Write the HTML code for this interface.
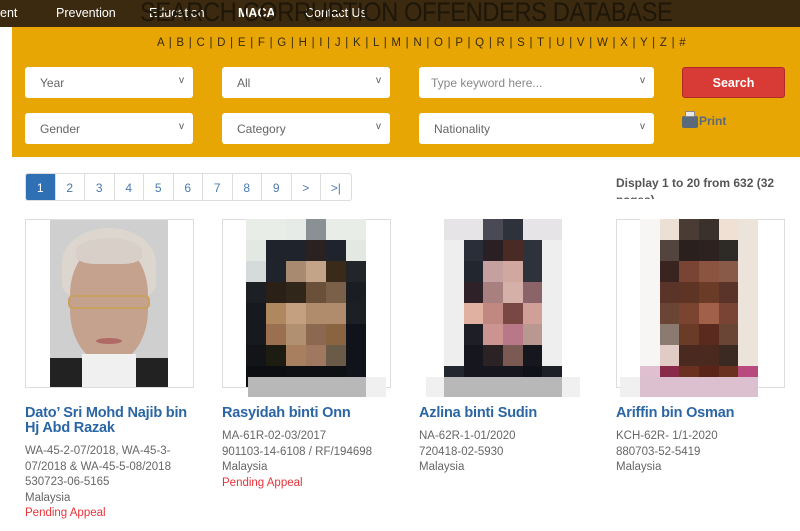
<!DOCTYPE html>
<html><head><meta charset="utf-8"><style>
*{margin:0;padding:0;box-sizing:border-box}
body{width:800px;height:531px;overflow:hidden;background:#fff;font-family:"Liberation Sans",sans-serif;position:relative}
.a{position:absolute}
.nav{left:0;top:0;width:800px;height:27px;background:#3b2a0f;}
.nav span{position:absolute;top:6px;color:#fff;font-size:12.5px}
.title{left:140px;top:-3px;font-size:27px;color:#1e1608;letter-spacing:-0.5px;white-space:nowrap;transform:scaleX(.88);transform-origin:left}
.panel{left:12px;top:27px;width:788px;height:130px;background:#e8a605}
.letters{left:157px;width:500px;top:37px;font-size:11.5px;color:#3a2a10;letter-spacing:.75px;white-space:nowrap}
.sel{background:#fff;border-radius:3px;height:31px;font-size:12px;color:#666;padding:9px 0 0 15px}
.sel:after{content:"v";position:absolute;right:9px;top:8px;font-size:10px;color:#555}
.btn{left:682px;top:67px;width:103px;height:31px;background:#d83a36;border:1px solid #b02a28;border-radius:3px;color:#fff;font-weight:bold;font-size:12.5px;text-align:center;padding-top:8px}
.pg{top:173px;height:28px;border:1px solid #ddd;display:flex;border-radius:3px;overflow:hidden;left:25px}
.pg div{width:29.5px;text-align:center;font-size:12px;color:#4a7ab0;padding-top:7px;border-right:1px solid #ddd}
.grid{display:grid}
.name{font-size:14.5px;font-weight:bold;color:#2b66a4;line-height:15px;letter-spacing:-.2px}
.det{font-size:11.5px;color:#666;line-height:15.5px}
.red{color:#e8333a}
</style></head><body>
<div class="a nav">
<span style="left:0">ent</span><span style="left:56px">Prevention</span><span style="left:149px">Education</span><span style="left:238px;font-weight:bold">MACA</span><span style="left:305px">Contact Us</span>
</div>
<div class="a title">SEARCH CORRUPTION OFFENDERS DATABASE</div>
<div class="a panel"></div>
<div class="a letters">A | B | C | D | E | F | G | H | I | J | K | L | M | N | O | P | Q | R | S | T | U | V | W | X | Y | Z | #</div>
<div class="a sel" style="left:25px;top:67px;width:168px">Year</div>
<div class="a sel" style="left:222px;top:67px;width:168px">All</div>
<div class="a sel" style="left:419px;top:67px;width:235px;color:#888;padding-left:12px">Type keyword here...</div>
<div class="a sel" style="left:25px;top:113px;width:168px">Gender</div>
<div class="a sel" style="left:222px;top:113px;width:168px">Category</div>
<div class="a sel" style="left:419px;top:113px;width:235px">Nationality</div>
<div class="a btn">Search</div>
<div class="a" style="left:682px;top:116px;width:16px;height:12px;background:#5a6a7a;border-radius:2px"></div>
<div class="a" style="left:685px;top:111px;width:10px;height:6px;background:#e8e8e8;border:1px solid #888"></div>
<div class="a" style="left:699px;top:114px;font-size:12px;color:#5a6a7a;font-weight:bold">Print</div>
<div class="a pg"><div style="background:#2f6fb3;color:#fff">1</div><div>2</div><div>3</div><div>4</div><div>5</div><div>6</div><div>7</div><div>8</div><div>9</div><div>&gt;</div><div style="border-right:0">&gt;|</div></div>
<div class="a" style="left:616px;top:175px;font-size:12px;font-weight:bold;color:#555;line-height:17px;width:180px;height:24px;overflow:hidden">Display 1 to 20 from 632 (32 pages)</div>
<div class="a" style="left:25px;top:219px;width:169px;height:169px;border:1px solid #ddd"></div>
<div class="a" style="left:222px;top:219px;width:169px;height:169px;border:1px solid #ddd"></div>
<div class="a" style="left:616px;top:219px;width:169px;height:169px;border:1px solid #ddd"></div>
<div class="a" style="left:50px;top:220px;width:118px;height:167px;background:#d0cfcf;overflow:hidden">
<div class="a" style="left:12px;top:8px;width:94px;height:70px;border-radius:50% 50% 20% 20%;background:#dcd6cf"></div>
<div class="a" style="left:20px;top:26px;width:78px;height:116px;border-radius:42% 42% 45% 45%;background:#c4a28e"></div>
<div class="a" style="left:26px;top:18px;width:66px;height:26px;border-radius:50% 50% 30% 30%;background:#d8d0c8"></div>
<div class="a" style="left:18px;top:75px;width:82px;height:14px;border:2px solid #c8a060;border-radius:5px"></div>
<div class="a" style="left:46px;top:118px;width:26px;height:6px;border-radius:50%;background:#b06a66"></div>
<div class="a" style="left:0;top:138px;width:118px;height:30px;background:#222"></div>
<div class="a" style="left:32px;top:134px;width:54px;height:34px;background:#f0f0f0"></div>
</div>
<div class="a grid" style="left:246px;top:219px;width:120px;height:168px;grid-template-columns:repeat(6,20px);grid-template-rows:repeat(8,21px)">
<div style="background:#e8ede8"></div><div style="background:#e8ede8"></div><div style="background:#e6ebe8"></div><div style="background:#8a9194"></div><div style="background:#e8ede8"></div><div style="background:#e8ede8"></div>
<div style="background:#e3e8e3"></div><div style="background:#1f232b"></div><div style="background:#1f232b"></div><div style="background:#2a2220"></div><div style="background:#1f232b"></div><div style="background:#e3e8e3"></div>
<div style="background:#d5dadb"></div><div style="background:#1f232b"></div><div style="background:#a88a70"></div><div style="background:#c4a488"></div><div style="background:#3a2a1a"></div><div style="background:#22262a"></div>
<div style="background:#1c2024"></div><div style="background:#2a2018"></div><div style="background:#30261a"></div><div style="background:#6a5038"></div><div style="background:#7a6048"></div><div style="background:#1a1e22"></div>
<div style="background:#161a1e"></div><div style="background:#b08860"></div><div style="background:#c4a080"></div><div style="background:#b08c6c"></div><div style="background:#b08c6c"></div><div style="background:#1c2024"></div>
<div style="background:#161a1e"></div><div style="background:#9a7050"></div><div style="background:#b09070"></div><div style="background:#8c6850"></div><div style="background:#8a6440"></div><div style="background:#10141a"></div>
<div style="background:#121418"></div><div style="background:#1c1c10"></div><div style="background:#a88060"></div><div style="background:#a07860"></div><div style="background:#6a5a48"></div><div style="background:#10141a"></div>
<div style="background:#0c0e12"></div><div style="background:#0c0e12"></div><div style="background:#0e1014"></div><div style="background:#0e1014"></div><div style="background:#0e1014"></div><div style="background:#10141a"></div>
</div>
<div class="a" style="left:248px;top:377px;width:118px;height:20px;background:#b8b8b8"></div>
<div class="a" style="left:366px;top:377px;width:20px;height:20px;background:#f0f0f0"></div>
<div class="a grid" style="left:444px;top:219px;width:118px;height:168px;grid-template-columns:repeat(6,19.7px);grid-template-rows:repeat(8,21px)">
<div style="background:#e6e4e6"></div><div style="background:#e6e4e6"></div><div style="background:#4a4a56"></div><div style="background:#2e323a"></div><div style="background:#e6e4e6"></div><div style="background:#e6e4e6"></div>
<div style="background:#eee"></div><div style="background:#2a2e38"></div><div style="background:#2a2024"></div><div style="background:#4a2a24"></div><div style="background:#2e323a"></div><div style="background:#eee"></div>
<div style="background:#eee"></div><div style="background:#22262e"></div><div style="background:#c4a0a0"></div><div style="background:#d0a8a0"></div><div style="background:#2e323a"></div><div style="background:#eee"></div>
<div style="background:#eee"></div><div style="background:#2e2228"></div><div style="background:#a88080"></div><div style="background:#d4b0a8"></div><div style="background:#8a6468"></div><div style="background:#eee"></div>
<div style="background:#eee"></div><div style="background:#e0b0a0"></div><div style="background:#c08880"></div><div style="background:#7a4844"></div><div style="background:#d0a098"></div><div style="background:#eee"></div>
<div style="background:#eee"></div><div style="background:#1e1e26"></div><div style="background:#cc9490"></div><div style="background:#b87888"></div><div style="background:#b89890"></div><div style="background:#eee"></div>
<div style="background:#eee"></div><div style="background:#16161e"></div><div style="background:#2a2224"></div><div style="background:#7a5a52"></div><div style="background:#16161e"></div><div style="background:#eee"></div>
<div style="background:#22262e"></div><div style="background:#16161e"></div><div style="background:#16161e"></div><div style="background:#16161e"></div><div style="background:#10121a"></div><div style="background:#1e2028"></div>
</div>
<div class="a" style="left:426px;top:377px;width:154px;height:20px;background:#f0f0f0"></div>
<div class="a" style="left:444px;top:377px;width:118px;height:20px;background:#b8b8b8"></div>
<div class="a grid" style="left:640px;top:219px;width:118px;height:168px;grid-template-columns:repeat(6,19.7px);grid-template-rows:repeat(8,21px)">
<div style="background:#f8f6f4"></div><div style="background:#ece0d4"></div><div style="background:#4a3c34"></div><div style="background:#3a302c"></div><div style="background:#f0e0d4"></div><div style="background:#ece4da"></div>
<div style="background:#f8f6f4"></div><div style="background:#544440"></div><div style="background:#2a201e"></div><div style="background:#2e2220"></div><div style="background:#2e2a26"></div><div style="background:#ece4da"></div>
<div style="background:#f8f6f4"></div><div style="background:#3a2420"></div><div style="background:#7a4434"></div><div style="background:#8a5440"></div><div style="background:#8a5a48"></div><div style="background:#ece4da"></div>
<div style="background:#f8f6f4"></div><div style="background:#5a3428"></div><div style="background:#5e3424"></div><div style="background:#6a3c28"></div><div style="background:#5a3428"></div><div style="background:#ece4da"></div>
<div style="background:#f8f6f4"></div><div style="background:#6a4434"></div><div style="background:#7a4430"></div><div style="background:#a0604a"></div><div style="background:#7a4434"></div><div style="background:#ece4da"></div>
<div style="background:#f8f6f4"></div><div style="background:#8a7a70"></div><div style="background:#6a3c28"></div><div style="background:#5a2a1e"></div><div style="background:#6a4434"></div><div style="background:#ece4da"></div>
<div style="background:#f8f6f4"></div><div style="background:#e0ccc4"></div><div style="background:#4a2a20"></div><div style="background:#4a2a1e"></div><div style="background:#3a2a22"></div><div style="background:#ece4da"></div>
<div style="background:#e0c0d0"></div><div style="background:#8a2a4a"></div><div style="background:#6a3020"></div><div style="background:#5a2418"></div><div style="background:#6a3020"></div><div style="background:#b84a80"></div>
</div>
<div class="a" style="left:620px;top:377px;width:20px;height:20px;background:#f0f0f0"></div>
<div class="a" style="left:640px;top:377px;width:118px;height:20px;background:#dcc0d0"></div>
<div class="a" style="left:25px;top:406px;width:170px"><div class="name">Dato’ Sri Mohd Najib bin<br>Hj Abd Razak</div>
<div class="det" style="margin-top:8px">WA-45-2-07/2018, WA-45-3-<br>07/2018 &amp; WA-45-5-08/2018<br>530723-06-5165<br>Malaysia<br><span class="red">Pending Appeal</span></div></div>
<div class="a" style="left:222px;top:406px;width:180px"><div class="name">Rasyidah binti Onn</div>
<div class="det" style="margin-top:8px">MA-61R-02-03/2017<br>901103-14-6108 / RF/194698<br>Malaysia<br><span class="red">Pending Appeal</span></div></div>
<div class="a" style="left:419px;top:406px;width:180px"><div class="name">Azlina binti Sudin</div>
<div class="det" style="margin-top:8px">NA-62R-1-01/2020<br>720418-02-5930<br>Malaysia</div></div>
<div class="a" style="left:616px;top:406px;width:180px"><div class="name">Ariffin bin Osman</div>
<div class="det" style="margin-top:8px">KCH-62R- 1/1-2020<br>880703-52-5419<br>Malaysia</div></div>
</body></html>
